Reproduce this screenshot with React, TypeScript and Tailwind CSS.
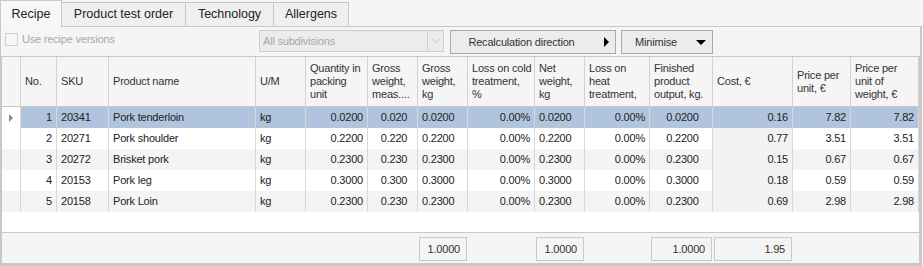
import React from "react";

type Align = "l" | "r" | "c";
type Col = { head: string[]; align: Align };

const GRID =
  "grid grid-cols-[19px_36px_52px_147px_50px_62px_50px_50px_67px_50px_65px_63px_80px_58px_68px]";

const COLS: Col[] = [
  { head: ["No."], align: "r" },
  { head: ["SKU"], align: "l" },
  { head: ["Product name"], align: "l" },
  { head: ["U/M"], align: "l" },
  { head: ["Quantity in", "packing", "unit"], align: "r" },
  { head: ["Gross", "weight,", "meas...."], align: "c" },
  { head: ["Gross", "weight,", "kg"], align: "l" },
  { head: ["Loss on cold", "treatment,", "%"], align: "r" },
  { head: ["Net", "weight,", "kg"], align: "l" },
  { head: ["Loss on", "heat", "treatment,"], align: "r" },
  { head: ["Finished", "product", "output, kg."], align: "c" },
  { head: ["Cost, €"], align: "r" },
  { head: ["Price per", "unit, €"], align: "r" },
  { head: ["Price per", "unit of", "weight, €"], align: "r" },
];

const ROWS: string[][] = [
  ["1", "20341", "Pork tenderloin", "kg", "0.0200", "0.020", "0.0200", "0.00%", "0.0200", "0.00%", "0.0200", "0.16", "7.82", "7.82"],
  ["2", "20271", "Pork shoulder", "kg", "0.2200", "0.220", "0.2200", "0.00%", "0.2200", "0.00%", "0.2200", "0.77", "3.51", "3.51"],
  ["3", "20272", "Brisket pork", "kg", "0.2300", "0.230", "0.2300", "0.00%", "0.2300", "0.00%", "0.2300", "0.15", "0.67", "0.67"],
  ["4", "20153", "Pork leg", "kg", "0.3000", "0.300", "0.3000", "0.00%", "0.3000", "0.00%", "0.3000", "0.18", "0.59", "0.59"],
  ["5", "20158", "Pork Loin", "kg", "0.2300", "0.230", "0.2300", "0.00%", "0.2300", "0.00%", "0.2300", "0.69", "2.98", "2.98"],
];

const ALIGN: Record<Align, string> = {
  l: "justify-start pl-[4px]",
  r: "justify-end pr-[4px]",
  c: "justify-center pl-[3px]",
};

const FOOT: Record<number, string> = { 6: "1.0000", 8: "1.0000", 10: "1.0000", 11: "1.95" };

function Tab({ label, w, active }: { label: string; w: string; active?: boolean }) {
  return (
    <div
      className={
        active
          ? `h-[27px] ${w} border-l border-t border-r border-[#c8c8c8] bg-[#f7f7f7] flex items-center justify-center text-[12.5px] text-[#222]`
          : `h-[25px] ${w} border-t border-r border-b border-[#c8c8c8] bg-[#efefef] flex items-center justify-center text-[12.5px] text-[#222]`
      }
    >
      {label}
    </div>
  );
}

export default function App() {
  return (
    <div
      className="w-[923px] h-[266px] bg-[#f5f5f5] overflow-hidden text-[11px] tracking-[-0.2px] text-[#222]"
      style={{ fontFamily: '"Liberation Sans", Arial, sans-serif' }}
    >
      {/* Tab strip */}
      <div className="flex items-end h-[27px] w-[922px] tracking-normal">
        <Tab label="Recipe" w="w-[62px]" active />
        <Tab label="Product test order" w="w-[124px]" />
        <Tab label="Technology" w="w-[88px]" />
        <Tab label="Allergens" w="w-[75px]" />
        <div className="flex-1 h-[27px] border-b border-[#c8c8c8]" />
      </div>

      {/* Panel */}
      <div className="w-[922px] h-[239px] border-l border-r-2 border-b-2 border-[#c8c8c8] bg-[#f5f5f5] flex flex-col">
        {/* Toolbar */}
        <div className="h-[29px] flex items-start">
          <div className="w-[258px] flex items-center pl-[4px] pt-[6px]">
            <div className="w-[13px] h-[13px] border border-[#cfcfcf] bg-[#f7f7f7]" />
            <span className="ml-[4px] text-[#a8a8a8] leading-[13px]">Use recipe versions</span>
          </div>
          <div className="mt-[3px] w-[185px] h-[22px] border border-[#cdcdcd] bg-[#ececec] flex items-stretch">
            <div className="flex-1 flex items-center pl-[3px] text-[#a8a8a8]">All subdivisions</div>
            <div className="w-[16px] border-l border-[#cdcdcd] flex items-center justify-center">
              <svg width="9" height="6" viewBox="0 0 9 6">
                <polyline points="0.5,0.5 4.5,5 8.5,0.5" fill="none" stroke="#c4c4c4" strokeWidth="1" />
              </svg>
            </div>
          </div>
          <div className="ml-[6px] mt-[3px] w-[166px] h-[24px] border border-[#a9a9a9] bg-[#ececec] flex items-center">
            <span className="flex-1 text-center pr-[12px] text-[#333]">Recalculation direction</span>
            <div className="mr-[6px] w-0 h-0 border-y-[5px] border-y-transparent border-l-[5px] border-l-black" />
          </div>
          <div className="ml-[5px] mt-[3px] w-[92px] h-[24px] border border-[#a9a9a9] bg-[#ececec] flex items-center">
            <span className="flex-1 text-center pr-[6px] text-[#333]">Minimise</span>
            <div className="mr-[6px] w-0 h-0 border-x-[5px] border-x-transparent border-t-[5px] border-t-black" />
          </div>
        </div>

        {/* Grid */}
        <div className="w-[919px] h-[208px] border border-[#c8c8c8] bg-white flex flex-col">
          {/* Header */}
          <div className={`${GRID} h-[50px] border-b border-[#c8c8c8] bg-[#f5f5f5]`}>
            <div className="border-r border-[#d2d2d2]" />
            {COLS.map((c, i) => (
              <div
                key={i}
                className="border-r border-[#d2d2d2] flex items-center px-[4px] leading-[13px] text-[#333] overflow-hidden"
              >
                <div>
                  {c.head.map((l, j) => (
                    <div key={j} className="whitespace-nowrap">
                      {l}
                    </div>
                  ))}
                </div>
              </div>
            ))}
          </div>

          {/* Rows */}
          {ROWS.map((r, ri) => {
            const selected = ri === 0;
            const band = ri % 2 === 0 ? "bg-[#f4f4f4]" : "bg-white";
            return (
              <div key={ri} className={`${GRID} h-[21px]`}>
                <div
                  className={`border-r border-[#d8d8d8] flex items-center pl-[7px] ${
                    selected ? "bg-white" : band
                  }`}
                >
                  {selected && (
                    <div className="w-0 h-0 border-y-[4px] border-y-transparent border-l-[4px] border-l-[#8a8a8a]" />
                  )}
                </div>
                {r.map((v, ci) => {
                  const bg = selected
                    ? "bg-[#b0c4de]"
                    : ci === 11
                    ? "bg-[#f2f2f2]"
                    : band;
                  return (
                    <div
                      key={ci}
                      className={`border-r border-[#d8d8d8] flex items-center whitespace-nowrap overflow-hidden ${ALIGN[COLS[ci].align]} ${bg}`}
                    >
                      {v}
                    </div>
                  );
                })}
              </div>
            );
          })}

          {/* Empty area */}
          <div className="flex-1 bg-white" />

          {/* Footer */}
          <div className={`${GRID} h-[31px] border-t border-[#c8c8c8] bg-[#f4f4f4]`}>
            <div />
            {COLS.map((_, ci) => (
              <div key={ci} className="pt-[4px] px-[1px]">
                {FOOT[ci] && (
                  <div className="h-[24px] border border-[#c8c8c8] flex items-center justify-end pr-[6px] text-[#333]">
                    {FOOT[ci]}
                  </div>
                )}
              </div>
            ))}
          </div>
        </div>
      </div>
    </div>
  );
}
